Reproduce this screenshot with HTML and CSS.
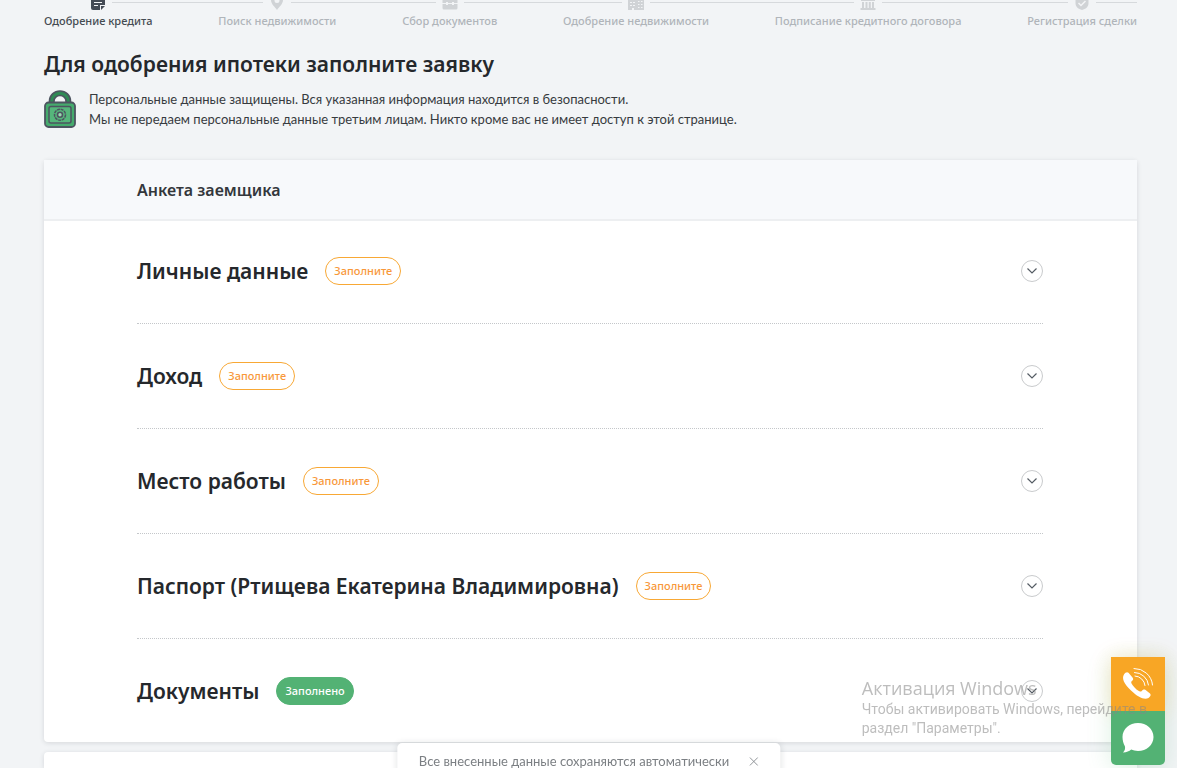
FILE: index.html
```html
<!DOCTYPE html>
<html lang="ru">
<head>
<meta charset="utf-8">
<meta name="viewport" content="width=device-width, initial-scale=1">
<title>Заявка на ипотеку</title>
<link rel="stylesheet" href="styles.css">
</head>
<body>
<main class="page">
  <ol class="steps">
    <li class="step step-active">
      <div class="step-track"><span class="rail rail-hidden"></span>
        <svg class="step-icon" viewBox="0 0 18 18"><path fill="currentColor" d="M4 1h10q2 0 2 2v8h-5v5H4q-2 0-2-2V3q0-2 2-2zM12 12h4l-4 4z"/><path stroke="#f3f4f6" stroke-width="1" d="M5 5.500h8M5 8.500h8M5 11.500h4"/></svg>
        <span class="rail"></span></div>
      <span class="step-label">Одобрение кредита</span>
    </li>
    <li class="link" aria-hidden="true"></li>
    <li class="step">
      <div class="step-track"><span class="rail"></span>
        <svg class="step-icon" viewBox="0 0 18 18"><path fill="currentColor" fill-rule="evenodd" d="M9 0a6 6 0 0 1 6 6c0 4-4 7-6 10C7 13 3 10 3 6a6 6 0 0 1 6-6zm0 4a2.500 2.500 0 1 0 0 5 2.500 2.500 0 0 0 0-5z"/></svg>
        <span class="rail"></span></div>
      <span class="step-label">Поиск недвижимости</span>
    </li>
    <li class="link" aria-hidden="true"></li>
    <li class="step">
      <div class="step-track"><span class="rail"></span>
        <svg class="step-icon" viewBox="0 0 18 18"><path fill="currentColor" fill-rule="evenodd" d="M6 4V2h6v2h3q1.500 0 1.500 1.500V9H13V8h-2v1H7V8H5v1H1.500V5.500Q1.500 4 3 4zM1.500 10H5v1h2v-1h4v1h2v-1h3.500v4q0 1.500-1.500 1.500H3q-1.500 0-1.500-1.500z"/></svg>
        <span class="rail"></span></div>
      <span class="step-label">Сбор документов</span>
    </li>
    <li class="link" aria-hidden="true"></li>
    <li class="step">
      <div class="step-track"><span class="rail"></span>
        <svg class="step-icon" viewBox="0 0 18 18"><path fill="currentColor" fill-rule="evenodd" d="M1 2h9v3h7v11H7v-2H5v2H1zM3 5v1h2V5zm3 0v1h2V5zM3 8v1h2V8zm3 0v1h2V8zm-3 3v1h2v-1zm3 0v1h2v-1zm5-4v1h1.500V7zm3 0v1h1.500V7zm-3 3v1h1.500v-1zm3 0v1h1.500v-1zm-3 3v1h1.500v-1zm3 0v1h1.500v-1z"/></svg>
        <span class="rail"></span></div>
      <span class="step-label">Одобрение недвижимости</span>
    </li>
    <li class="link" aria-hidden="true"></li>
    <li class="step">
      <div class="step-track"><span class="rail"></span>
        <svg class="step-icon" viewBox="0 0 18 18"><path fill="currentColor" d="M9 1l7 4v2H2V5zM3 8h2v6H3zM6.500 8h2v6h-2zM9.800 8h2v6h-2zM13 8h2v6h-2zM1.500 14h15v2h-15z"/></svg>
        <span class="rail"></span></div>
      <span class="step-label">Подписание кредитного договора</span>
    </li>
    <li class="link" aria-hidden="true"></li>
    <li class="step">
      <div class="step-track"><span class="rail"></span>
        <svg class="step-icon" viewBox="0 0 18 18"><path fill="currentColor" d="M9 1l6.500 2v6c0 4-3 6-6.500 7-3.500-1-6.500-3-6.500-7V3z"/><path fill="none" stroke="#f3f4f6" stroke-width="1.500" d="M5.500 9l2.500 2.500L12.500 7"/></svg>
        <span class="rail"></span></div>
      <span class="step-label">Регистрация сделки</span>
    </li>
  </ol>

  <h1 class="title">Для одобрения ипотеки заполните заявку</h1>
  <div class="notice">
    <svg class="lock" viewBox="0 0 32 38" aria-hidden="true">
      <path fill="#2f8a55" stroke="#4d5460" stroke-width="1.600" d="M5.500 13v-2a10.500 10 0 0 1 21 0v2h-4.500v-2a6 5.500 0 0 0-12 0v2z"/>
      <rect x="1" y="12.500" width="30" height="24.500" rx="3.500" fill="#45ab6d" stroke="#4d5460" stroke-width="1.800"/>
      <rect x="5" y="16.500" width="22" height="16.500" rx="2" fill="#55b67b" stroke="#4d5460" stroke-width="1.500"/>
      <circle cx="16" cy="24.700" r="5.500" fill="none" stroke="#4d5460" stroke-width="1.500" stroke-dasharray="3 .7"/>
      <circle cx="16" cy="24.700" r="2.500" fill="#9bd5b1" stroke="#4d5460" stroke-width="1.600"/>
    </svg>
    <p class="notice-text">Персональные данные защищены. Вся указанная информация находится в безопасности.<br>Мы не передаем персональные данные третьим лицам. Никто кроме вас не имеет доступ к этой странице.</p>
  </div>

  <section class="card">
    <h2 class="card-head">Анкета заемщика</h2>
    <div class="rows">
      <div class="row"><h3 class="row-title">Личные данные</h3><span class="pill">Заполните</span>
        <button class="toggle" type="button" aria-label="Развернуть: Личные данные"><svg viewBox="0 0 10 6"><path d="M.5 .5L5 5 9.500 .5"/></svg></button></div>
      <div class="row"><h3 class="row-title">Доход</h3><span class="pill">Заполните</span>
        <button class="toggle" type="button" aria-label="Развернуть: Доход"><svg viewBox="0 0 10 6"><path d="M.5 .5L5 5 9.500 .5"/></svg></button></div>
      <div class="row"><h3 class="row-title">Место работы</h3><span class="pill">Заполните</span>
        <button class="toggle" type="button" aria-label="Развернуть: Место работы"><svg viewBox="0 0 10 6"><path d="M.5 .5L5 5 9.500 .5"/></svg></button></div>
      <div class="row"><h3 class="row-title">Паспорт (Ртищева Екатерина Владимировна)</h3><span class="pill">Заполните</span>
        <button class="toggle" type="button" aria-label="Развернуть: Паспорт"><svg viewBox="0 0 10 6"><path d="M.5 .5L5 5 9.500 .5"/></svg></button></div>
      <div class="row"><h3 class="row-title">Документы</h3><span class="pill pill-done">Заполнено</span>
        <button class="toggle" type="button" aria-label="Развернуть: Документы"><svg viewBox="0 0 10 6"><path d="M.5 .5L5 5 9.500 .5"/></svg></button></div>
    </div>
  </section>
  <section class="card card-next"></section>
</main>

<div class="contacts">
  <button class="contact contact-call" type="button" aria-label="Позвонить">
    <svg viewBox="0 0 34 34"><path fill="#fff" d="M3 7.500C4.300 5.500 6 4.500 7.500 5.800l4.200 5c.9 1.400.5 2.400-1.300 3.700-.7 1 .3 3 3.400 6.300s5.500 4.300 6.700 3.400c1.300-1.800 2.600-2.200 4.100-1.300l4.400 3.700c1.300 1.300.5 3-1.500 4.400-4 2.300-10.500-.7-17.500-7.500S.5 11.500 3 7.500z"/><path fill="none" stroke="#fff" stroke-width="1" stroke-linecap="round" d="M13 1.500A18 18 0 0 1 31.500 18M13.500 5.500A14 14 0 0 1 27.500 18M14 9A10.500 10.500 0 0 1 24 18.500"/></svg>
  </button>
  <button class="contact contact-chat" type="button" aria-label="Открыть чат">
    <svg viewBox="0 0 34 34"><path fill="#fff" d="M17 2c8.500 0 15.500 6 15.500 14S25.500 30 17 30c-2.600 0-4.800-.5-6.800-1.400-2 1.700-4.500 2.900-8.200 2.900 2-2 2.400-4 1.900-6.200C2.500 22.600 1.500 19.500 1.500 16 1.500 8 8.500 2 17 2z"/></svg>
  </button>
</div>

<div class="toast" role="status">
  <span>Все внесенные данные сохраняются автоматически</span>
  <button class="toast-close" type="button" aria-label="Закрыть"><svg viewBox="0 0 10 10"><path d="M.5 .5l9 9M9.500 .5l-9 9"/></svg></button>
</div>

<aside class="watermark">
  <p class="watermark-title">Активация Windows</p>
  <p class="watermark-text">Чтобы активировать Windows, перейдите в<br>раздел "Параметры".</p>
</aside>
</body>
</html>
```
FILE: styles.css
```css
* { box-sizing: border-box; margin: 0; padding: 0; }
body {
  height: 100vh;
  overflow: hidden;
  background: #f2f4f6;
  color: #25282c;
  font-family: "Noto Sans", "Open Sans", sans-serif;
}
button { border: 0; background: none; font: inherit; cursor: pointer; }
svg { display: block; }

.page {
  display: flex;
  flex-direction: column;
  height: 100%;
  padding: 0 40px 0 44px;
}

.steps {
  display: flex;
  margin-top: -7px;
  list-style: none;
  color: #d0d3d6;
}
.link {
  flex: 1;
  height: 1px;
  margin-top: 9px;
  background: #d6d9dc;
}
.step-track { display: flex; align-items: center; height: 19px; gap: 5px; }
.step-icon { flex: none; width: 18px; height: 18px; }
.step-active .step-icon { color: #444b55; }
.rail { flex: 1; height: 1px; background: #d6d9dc; }
.rail-hidden { background: none; }
.step-label {
  display: block;
  font-size: 11px;
  line-height: 18px;
  font-weight: 500;
  color: #b0b5ba;
  white-space: nowrap;
}
.step-active .step-label { color: #454b52; }

.title {
  margin-top: 19px;
  font-size: 21px;
  line-height: 30px;
  font-weight: 600;
}
.notice { display: flex; gap: 13px; margin-top: 10px; }
.lock { flex: none; width: 32px; height: 38px; margin-top: 1px; }
.notice-text {
  font-family: Lato, "Noto Sans", sans-serif;
  font-size: 13px;
  line-height: 20px;
  color: #373b40;
}

.card {
  margin-top: 31px;
  background: #fff;
  border-radius: 4px;
  box-shadow: 0 1px 5px rgba(40, 50, 60, .14);
}
.card-head {
  padding: 18px 93px 17px;
  background: #f7f9fb;
  border-bottom: 2px solid #edeff1;
  font-size: 16px;
  line-height: 24px;
  font-weight: 600;
  color: #33373b;
}
.rows { padding: 0 94px 0 93px; }
.row {
  display: flex;
  align-items: center;
  padding: 38px 0;
  border-bottom: 1px dotted #c4c7ca;
}
.row:first-child { padding-top: 36px; }
.row:last-child { padding-bottom: 37px; border-bottom: 0; }
.row-title { font-size: 21px; line-height: 28px; font-weight: 600; }
.pill {
  margin-left: 17px;
  padding: 0 8px;
  border: 1px solid #f8a835;
  border-radius: 14px;
  font-size: 11px;
  line-height: 26px;
  font-weight: 500;
  color: #f8983a;
}
.pill-done { background: #53b274; border-color: #53b274; color: #fff; }
.toggle {
  display: grid;
  place-items: center;
  width: 22px;
  height: 22px;
  margin-left: auto;
  border: 1px solid #c9cbcd;
  border-radius: 50%;
}
.toggle svg { width: 10px; height: 6px; }
.toggle path { fill: none; stroke: #555c64; stroke-width: 1.2; }
.card-next { flex: 1; margin-top: 10px; border-radius: 4px 4px 0 0; }

.contacts {
  position: fixed;
  right: 12px;
  bottom: 3px;
  width: 54px;
  border-radius: 0 0 5px 5px;
  box-shadow: 0 4px 24px rgba(83, 178, 116, .2);
}
.contact { display: grid; place-items: center; width: 54px; height: 54px; }
.contact svg { width: 34px; height: 34px; }
.contact-call { background: #f8a625; box-shadow: 0 0 20px rgba(248, 166, 37, .22); }
.contact-chat { position: relative; background: #53b274; border-radius: 0 0 5px 5px; }

.toast {
  position: fixed;
  left: 50%;
  bottom: -9px;
  transform: translateX(-50%);
  display: flex;
  align-items: center;
  gap: 20px;
  padding: 10px 22px 8px;
  border-radius: 5px;
  background: #fff;
  box-shadow: 0 0 6px rgba(40, 50, 60, .14);
  font-family: Lato, "Noto Sans", sans-serif;
  font-size: 13px;
  line-height: 16px;
  color: #7b7f83;
  white-space: nowrap;
}
.toast-close svg { width: 9px; height: 9px; }
.toast-close path { stroke: #85898d; stroke-width: 1; }

.watermark {
  position: fixed;
  right: 30px;
  bottom: 30px;
  color: rgba(135, 135, 135, .55);
  pointer-events: none;
  white-space: nowrap;
}
.watermark-title {
  font-family: "Open Sans", "Noto Sans", sans-serif;
  font-size: 18px;
  line-height: 24px;
}
.watermark-text {
  font-family: Roboto, "Noto Sans", sans-serif;
  font-size: 14px;
  line-height: 19px;
}
```
